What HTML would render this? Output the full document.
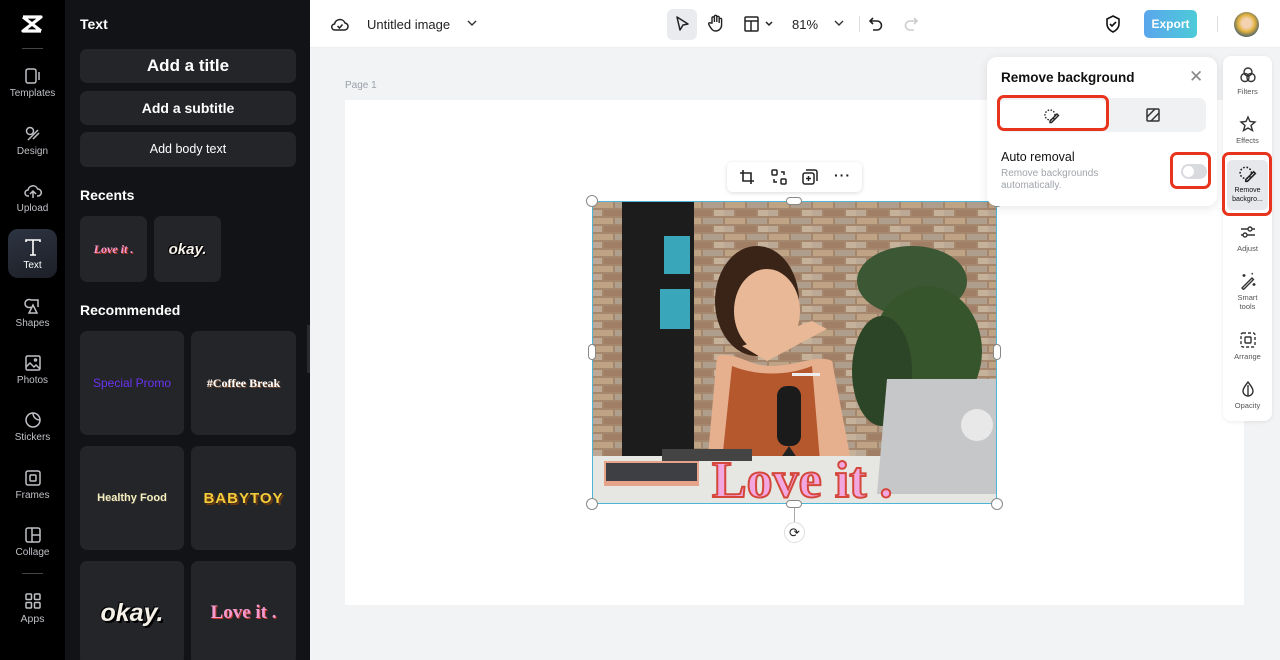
<!DOCTYPE html>
<html><head><meta charset="utf-8"><style>
*{box-sizing:border-box;margin:0;padding:0}
html,body{width:1280px;height:660px;overflow:hidden}
body{font-family:"Liberation Sans",sans-serif;background:#f2f3f5;position:relative}
.abs{position:absolute}
#nav{left:0;top:0;width:65px;height:660px;background:#000}
.ni{position:absolute;left:8px;width:49px;height:50px;text-align:center;color:#bfc1c6;font-size:10px}
.ni svg{display:block;margin:11px auto 3px}
#panel{left:65px;top:0;width:245px;height:660px;background:#121316;overflow:hidden}
.btn{position:absolute;left:15px;width:216px;background:#242529;border-radius:7px;color:#fff;text-align:center;font-weight:bold}
.h{position:absolute;left:15px;color:#fff;font-weight:bold;font-size:14px}
.card{position:absolute;background:#242529;border-radius:7px;display:flex;align-items:center;justify-content:center;font-weight:bold}
#top{left:310px;top:0;width:970px;height:48px;background:#fff;border-bottom:1px solid #eceef0}
#page{left:345px;top:100px;width:899px;height:505px;background:#fff}
#rt{left:1223px;top:56px;width:49px;height:365px;background:#fff;border-radius:8px;box-shadow:0 1px 4px rgba(0,0,0,.08)}
.ri{position:absolute;left:0;width:49px;text-align:center;font-size:7.5px;color:#555;line-height:9px}
.ri svg{display:block;margin:0 auto 3px}
#pop{left:987px;top:57px;width:230px;height:149px;background:#fff;border-radius:10px;box-shadow:0 2px 10px rgba(0,0,0,.1)}
.red{position:absolute;border:3px solid #e8341c;border-radius:7px}
</style></head><body>
<div id="nav" class="abs">
 <svg class="abs" style="left:20px;top:14px" width="24" height="20" viewBox="0 0 24 20"><path d="M3 3h18L3 17h18M3 3l18 14" stroke="#fff" stroke-width="3.2" fill="none" stroke-linejoin="round"/></svg>
 <div class="abs" style="left:22px;top:48px;width:21px;height:1px;background:#444"></div>
 <div class="ni" style="top:56px"><svg width="18" height="18" viewBox="0 0 18 18" fill="none" stroke="#bfc1c6" stroke-width="1.5"><rect x="2" y="2" width="10" height="14" rx="2"/><path d="M15 5v8"/></svg>Templates</div>
 <div class="ni" style="top:114px"><svg width="18" height="18" viewBox="0 0 18 18" fill="none" stroke="#bfc1c6" stroke-width="1.5"><circle cx="6" cy="6" r="3.5"/><path d="M9 14l6-6M4 15l10-10"/></svg>Design</div>
 <div class="ni" style="top:171px"><svg width="18" height="18" viewBox="0 0 18 18" fill="none" stroke="#bfc1c6" stroke-width="1.5"><path d="M5 14H4a3 3 0 010-6 5 5 0 019.6-1A3.5 3.5 0 0114 14h-1M9 16V9m-3 3l3-3 3 3"/></svg>Upload</div>
 <div class="ni" style="top:229px;background:linear-gradient(160deg,#2d3442,#1c1f26);border-radius:10px;color:#fff;height:49px"><svg style="margin-top:8px" width="20" height="20" viewBox="0 0 20 20" fill="none" stroke="#fff" stroke-width="1.6"><path d="M3 5V3h14v2M10 3v15M7 18h6"/></svg>Text</div>
 <div class="ni" style="top:286px"><svg width="18" height="18" viewBox="0 0 18 18" fill="none" stroke="#bfc1c6" stroke-width="1.5"><path d="M7 10A4 4 0 117 3h7v7M9 8l-4 8h8z"/></svg>Shapes</div>
 <div class="ni" style="top:343px"><svg width="18" height="18" viewBox="0 0 18 18" fill="none" stroke="#bfc1c6" stroke-width="1.5"><rect x="2" y="2" width="14" height="14" rx="1.5"/><path d="M2 13l4-4 4 4 2-2 4 4"/><circle cx="11.5" cy="6" r="1"/></svg>Photos</div>
 <div class="ni" style="top:400px"><svg width="18" height="18" viewBox="0 0 18 18" fill="none" stroke="#bfc1c6" stroke-width="1.5"><path d="M16 9A7 7 0 119 2c0 4 3 7 7 7zM9 2a7 7 0 017 7"/></svg>Stickers</div>
 <div class="ni" style="top:458px"><svg width="18" height="18" viewBox="0 0 18 18" fill="none" stroke="#bfc1c6" stroke-width="1.5"><rect x="2" y="2" width="14" height="14" rx="2"/><rect x="6" y="6" width="6" height="6" rx="1"/></svg>Frames</div>
 <div class="ni" style="top:515px"><svg width="18" height="18" viewBox="0 0 18 18" fill="none" stroke="#bfc1c6" stroke-width="1.5"><rect x="2" y="2" width="14" height="14" rx="2"/><path d="M8 2v14M8 9h8"/></svg>Collage</div>
 <div class="abs" style="left:22px;top:573px;width:21px;height:1px;background:#444"></div>
 <div class="ni" style="top:581px;font-size:10.5px"><svg width="18" height="18" viewBox="0 0 18 18" fill="none" stroke="#bfc1c6" stroke-width="1.5"><rect x="2" y="2" width="5.5" height="5.5" rx="1"/><rect x="10.5" y="2" width="5.5" height="5.5" rx="1"/><rect x="2" y="10.5" width="5.5" height="5.5" rx="1"/><rect x="10.5" y="10.5" width="5.5" height="5.5" rx="1"/></svg>Apps</div>
</div>
<div id="panel" class="abs">
 <div class="h" style="top:16px">Text</div>
 <div class="btn" style="top:49px;height:34px;line-height:34px;font-size:17px">Add a title</div>
 <div class="btn" style="top:91px;height:34px;line-height:34px;font-size:14px">Add a subtitle</div>
 <div class="btn" style="top:132px;height:35px;line-height:35px;font-size:12.5px;font-weight:normal">Add body text</div>
 <div class="h" style="top:187px">Recents</div>
 <div class="card" style="left:15px;top:216px;width:67px;height:66px;font-family:'Liberation Serif',serif;font-style:italic;color:#f39ad0;font-size:12px;text-shadow:1px 1px 0 #c0392b">Love it .</div>
 <div class="card" style="left:89px;top:216px;width:67px;height:66px;font-style:italic;color:#f5f0e8;font-size:15px;text-shadow:1px 1px 0 #000,-1px -1px 0 #000">okay.</div>
 <div class="h" style="top:302px">Recommended</div>
 <div class="card" style="left:15px;top:331px;width:104px;height:104px;color:#6c32f0;font-size:12px;font-weight:normal">Special Promo</div>
 <div class="card" style="left:126px;top:331px;width:105px;height:104px;color:#fff;font-family:'Liberation Serif',serif;font-size:12px;text-shadow:1px 1px 0 #7a4b2e">#Coffee Break</div>
 <div class="card" style="left:15px;top:446px;width:104px;height:104px;color:#f5efc0;font-size:11px;text-shadow:1px 1px 0 #333">Healthy Food</div>
 <div class="card" style="left:126px;top:446px;width:105px;height:104px;color:#f2cc3a;font-size:15px;letter-spacing:1px;text-shadow:2px 2px 0 #6b3a10">BABYTOY</div>
 <div class="card" style="left:15px;top:561px;width:104px;height:104px;color:#f5f0e8;font-style:italic;font-size:25px;text-shadow:2px 2px 0 #000,-1px -1px 0 #000">okay.</div>
 <div class="card" style="left:126px;top:561px;width:105px;height:104px;color:#f39ad0;font-family:'Liberation Serif',serif;font-size:19px;text-shadow:1px 1px 0 #c0392b">Love it .</div>
 <div class="abs" style="left:242px;top:325px;width:10px;height:48px;background:#2a2b2f;border-radius:0 6px 6px 0"></div>
</div>
<div id="top" class="abs">
 <svg class="abs" style="left:21px;top:16px" width="18" height="16" viewBox="0 0 18 16" fill="none" stroke="#222" stroke-width="1.5"><path d="M5 14H4a3 3 0 01-.5-6A5.5 5.5 0 0114 7a3.5 3.5 0 01-1 7zM6.5 10l2 2 3-3.5"/></svg>
 <div class="abs" style="left:57px;top:17px;font-size:13px;color:#222">Untitled image</div>
 <svg class="abs" style="left:157px;top:20px" width="10" height="7" viewBox="0 0 10 7"><path d="M1 1l4 4 4-4" stroke="#333" stroke-width="1.4" fill="none"/></svg>
 <div class="abs" style="left:357px;top:9px;width:30px;height:31px;background:#e9ebee;border-radius:6px"></div>
 <svg class="abs" style="left:365px;top:15px" width="15" height="18" viewBox="0 0 15 18"><path d="M2 2l11 7-5 1-3 5z" stroke="#222" stroke-width="1.5" fill="none" stroke-linejoin="round"/></svg>
 <svg class="abs" style="left:398px;top:14px" width="16" height="18" viewBox="0 0 16 18" fill="none" stroke="#222" stroke-width="1.4"><path d="M4 9V4a1.2 1.2 0 012.4 0v4V2.5a1.2 1.2 0 012.4 0V8V3.5a1.2 1.2 0 012.4 0V9V5.5a1.2 1.2 0 012.4 0V11a6 6 0 01-6 6c-3 0-4-2-6-5l-1-2a1.2 1.2 0 012-1z"/></svg>
 <svg class="abs" style="left:434px;top:16px" width="30" height="16" viewBox="0 0 30 16" fill="none" stroke="#222" stroke-width="1.5"><rect x="1" y="1" width="13" height="14" rx="1"/><path d="M1 5h13M7 5v10M22 6l3 3 3-3"/></svg>
 <div class="abs" style="left:482px;top:17px;font-size:13px;color:#222">81%</div>
 <svg class="abs" style="left:524px;top:20px" width="10" height="7" viewBox="0 0 10 7"><path d="M1 1l4 4 4-4" stroke="#333" stroke-width="1.4" fill="none"/></svg>
 <div class="abs" style="left:549px;top:16px;width:1px;height:16px;background:#ddd"></div>
 <svg class="abs" style="left:559px;top:16px" width="14" height="16" viewBox="0 0 14 16" fill="none" stroke="#222" stroke-width="1.6"><path d="M4 2L1 5l3 3M1 5h7a4.5 4.5 0 010 9H4"/></svg>
 <svg class="abs" style="left:594px;top:16px" width="14" height="16" viewBox="0 0 14 16" fill="none" stroke="#ccc" stroke-width="1.6"><path d="M10 2l3 3-3 3M13 5H6a4.5 4.5 0 000 9h4"/></svg>
 <svg class="abs" style="left:795px;top:15px" width="16" height="18" viewBox="0 0 16 18" fill="none" stroke="#111" stroke-width="1.6"><path d="M8 1l6 3v5c0 4-3 6.5-6 8-3-1.5-6-4-6-8V4zM5 9l2 2 4-4"/></svg>
 <div class="abs" style="left:834px;top:10px;width:53px;height:28px;border-radius:5px;background:linear-gradient(90deg,#5aa6ec,#4ccbd8);color:#fff;font-size:12px;font-weight:bold;line-height:28px;text-align:center">Export</div>
 <div class="abs" style="left:907px;top:16px;width:1px;height:16px;background:#ddd"></div>
 <div class="abs" style="left:924px;top:12px;width:25px;height:25px;border-radius:50%;background:radial-gradient(circle at 50% 45%,#f2d2b0 25%,#e3b340 45%,#2e5170 80%)"></div>
</div>
<div class="abs" style="left:345px;top:80px;font-size:10px;color:#9aa0a8">Page 1</div>
<div id="page" class="abs"></div>
<div class="abs" style="left:727px;top:162px;width:135px;height:30px;background:#fff;border-radius:6px;box-shadow:0 1px 4px rgba(0,0,0,.15)">
 <svg class="abs" style="left:12px;top:7px" width="16" height="16" viewBox="0 0 16 16" fill="none" stroke="#222" stroke-width="1.6"><path d="M4 1v11h11M1 4h11v11"/></svg>
 <svg class="abs" style="left:44px;top:7px" width="16" height="16" viewBox="0 0 16 16" fill="none" stroke="#222" stroke-width="1.5"><rect x="1" y="1" width="5" height="5" rx="1"/><rect x="10" y="10" width="5" height="5" rx="1"/><path d="M10 3h3v3M6 13H3v-3"/></svg>
 <svg class="abs" style="left:75px;top:7px" width="16" height="16" viewBox="0 0 16 16" fill="none" stroke="#222" stroke-width="1.5"><rect x="1" y="4" width="11" height="11" rx="2"/><path d="M4 1h9a2 2 0 012 2v9M6.5 7v5M4 9.5h5"/></svg>
 <div class="abs" style="left:107px;top:5px;font-size:14px;font-weight:bold;color:#222;letter-spacing:1px">···</div>
</div>
<svg class="abs" style="left:592px;top:201px" width="405" height="303" viewBox="0 0 405 303">
 <defs><pattern id="br" width="44" height="16" patternUnits="userSpaceOnUse"><rect width="44" height="16" fill="#a5876e"/><rect x="1" y="1" width="20" height="6" fill="#bfa385"/><rect x="23" y="1" width="20" height="6" fill="#b09e8c"/><rect x="-10" y="9" width="20" height="6" fill="#bba995"/><rect x="12" y="9" width="20" height="6" fill="#a07f66"/><rect x="34" y="9" width="20" height="6" fill="#c6b29a"/></pattern></defs>
 <rect width="405" height="303" fill="url(#br)"/>
 <rect x="30" y="0" width="72" height="255" fill="#1d1c1d"/>
 <rect x="72" y="35" width="26" height="38" fill="#3aa6b9"/><rect x="68" y="88" width="30" height="40" fill="#3aa6b9"/>
 <ellipse cx="320" cy="80" rx="55" ry="35" fill="#3b5733"/><ellipse cx="335" cy="150" rx="55" ry="65" fill="#36552d"/><ellipse cx="290" cy="170" rx="30" ry="55" fill="#2c4526"/>
 <ellipse cx="165" cy="100" rx="42" ry="55" fill="#3a2418"/>
 <ellipse cx="175" cy="110" rx="33" ry="42" fill="#e8b897"/>
 <path d="M115 265l10-110c20-5 30 10 55 10s45-12 60-5l20 105z" fill="#e6b08f"/>
 <path d="M140 165c25 10 55 10 80 0l8 95H130z" fill="#b5582e"/>
 <path d="M150 145l70-25 15 8-60 32z" fill="#e8b897"/>
 <rect x="200" y="172" width="28" height="3" fill="#eee"/>
 <rect x="185" y="185" width="24" height="60" rx="10" fill="#1b1b1c"/>
 <path d="M180 270l17-25 17 25z" fill="#222"/>
 <rect x="0" y="255" width="405" height="48" fill="#e6e6e2"/>
 <path d="M295 178h110v115H285z" fill="#c6c7c9"/><circle cx="385" cy="224" r="16" fill="#e8e8e8"/>
 <rect x="12" y="260" width="95" height="25" fill="#e5a48a"/><rect x="14" y="262" width="91" height="18" fill="#3d3f44"/>
 <rect x="70" y="248" width="90" height="12" fill="#444"/>
 <text x="120" y="296" font-family="Liberation Serif,serif" font-weight="bold" font-size="52" fill="#f3a7e0" stroke="#d4473a" stroke-width="2">Love it .</text>
</svg>
<div class="abs" style="left:592px;top:201px;width:405px;height:303px;border:1.5px solid #4bb6d8"></div>
<div class="abs" style="left:586px;top:195px;width:12px;height:12px;border:1px solid #888;border-radius:50%;background:#fff"></div>
<div class="abs" style="left:991px;top:195px;width:12px;height:12px;border:1px solid #888;border-radius:50%;background:#fff"></div>
<div class="abs" style="left:586px;top:498px;width:12px;height:12px;border:1px solid #888;border-radius:50%;background:#fff"></div>
<div class="abs" style="left:991px;top:498px;width:12px;height:12px;border:1px solid #888;border-radius:50%;background:#fff"></div>
<div class="abs" style="left:786px;top:197px;width:16px;height:8px;border:1px solid #888;border-radius:4px;background:#fff"></div>
<div class="abs" style="left:786px;top:500px;width:16px;height:8px;border:1px solid #888;border-radius:4px;background:#fff"></div>
<div class="abs" style="left:588px;top:344px;width:8px;height:16px;border:1px solid #888;border-radius:4px;background:#fff"></div>
<div class="abs" style="left:993px;top:344px;width:8px;height:16px;border:1px solid #888;border-radius:4px;background:#fff"></div>
<div class="abs" style="left:794px;top:508px;width:1px;height:14px;background:#aaa"></div>
<div class="abs" style="left:784px;top:522px;width:21px;height:21px;border:1px solid #ddd;border-radius:50%;background:#fff;text-align:center;line-height:19px;font-size:13px;color:#222">⟳</div>
<div id="pop" class="abs">
 <div class="abs" style="left:14px;top:13px;font-size:13.5px;font-weight:bold;color:#111">Remove background</div>
 <div class="abs" style="left:202px;top:10px;font-size:17px;color:#888">✕</div>
 <div class="abs" style="left:11px;top:41px;width:208px;height:34px;background:#f0f1f3;border-radius:7px"></div>
 <div class="abs" style="left:13px;top:43px;width:106px;height:30px;background:#fff;border-radius:6px"></div>
 <svg class="abs" style="left:57px;top:51px" width="16" height="16" viewBox="0 0 16 16" fill="none" stroke="#222" stroke-width="1.4"><circle cx="6" cy="7" r="5" stroke-dasharray="1.5 1.5"/><path d="M6 13l7-7 1.5 1.5-7 7H6z"/></svg>
 <svg class="abs" style="left:159px;top:51px" width="14" height="14" viewBox="0 0 14 14" fill="none" stroke="#333" stroke-width="1.5"><rect x="1" y="1" width="12" height="12" rx="1"/><path d="M1 9l8-8M5 13l8-8"/></svg>
 <div class="abs" style="left:14px;top:93px;font-size:12.5px;color:#111;font-weight:500">Auto removal</div>
 <div class="abs" style="left:14px;top:111px;font-size:10px;color:#a0a4aa;line-height:12px">Remove backgrounds<br>automatically.</div>
 <div class="abs" style="left:194px;top:107px;width:26px;height:15px;border-radius:8px;background:#d8dadd"><div style="position:absolute;left:2px;top:2px;width:11px;height:11px;border-radius:50%;background:#fff"></div></div>
</div>
<div class="red" style="left:997px;top:95px;width:112px;height:36px"></div>
<div class="red" style="left:1170px;top:152px;width:41px;height:37px"></div>
<div id="rt" class="abs">
 <div class="ri" style="top:10px"><svg width="18" height="18" viewBox="0 0 18 18" fill="none" stroke="#333" stroke-width="1.4"><circle cx="9" cy="6" r="4"/><circle cx="6" cy="11.5" r="4"/><circle cx="12" cy="11.5" r="4"/></svg>Filters</div>
 <div class="ri" style="top:59px"><svg width="18" height="18" viewBox="0 0 18 18" fill="none" stroke="#333" stroke-width="1.4"><path d="M9 2l2 4.5 5 .5-4 3.5 1.5 5L9 13l-4.5 2.5 1.5-5-4-3.5 5-.5z"/></svg>Effects</div>
 <div class="ri" style="top:104px;left:4px;width:41px;height:50px;background:#e6e8eb;border-radius:5px;padding-top:5px;color:#111;font-size:7px"><svg width="18" height="18" viewBox="0 0 16 16" fill="none" stroke="#222" stroke-width="1.4"><circle cx="6" cy="7" r="5" stroke-dasharray="1.5 1.5"/><path d="M6 13l7-7 1.5 1.5-7 7H6z"/></svg>Remove<br>backgro...</div>
 <div class="red" style="left:-1px;top:96px;width:50px;height:64px"></div>
 <div class="ri" style="top:167px"><svg width="18" height="18" viewBox="0 0 18 18" fill="none" stroke="#333" stroke-width="1.4"><path d="M2 6h14M2 12h14"/><circle cx="11" cy="6" r="2" fill="#fff"/><circle cx="6" cy="12" r="2" fill="#fff"/></svg>Adjust</div>
 <div class="ri" style="top:216px"><svg width="18" height="18" viewBox="0 0 18 18" fill="none" stroke="#333" stroke-width="1.4"><path d="M3 16L13 6l1.5 1.5-10 10zM5 2v3M3.5 3.5h3M15 11v3M13.5 12.5h3M13 1l.5 1.5"/></svg>Smart<br>tools</div>
 <div class="ri" style="top:275px"><svg width="18" height="18" viewBox="0 0 18 18" fill="none" stroke="#333" stroke-width="1.4"><rect x="2" y="2" width="14" height="14" rx="2" stroke-dasharray="3 2"/><rect x="6" y="6" width="6" height="6" rx="1"/></svg>Arrange</div>
 <div class="ri" style="top:324px"><svg width="18" height="18" viewBox="0 0 18 18" fill="none" stroke="#333" stroke-width="1.4"><path d="M9 2c3 4 5 6.5 5 9a5 5 0 01-10 0c0-2.5 2-5 5-9zM9 16V5"/></svg>Opacity</div>
</div>
</body></html>
